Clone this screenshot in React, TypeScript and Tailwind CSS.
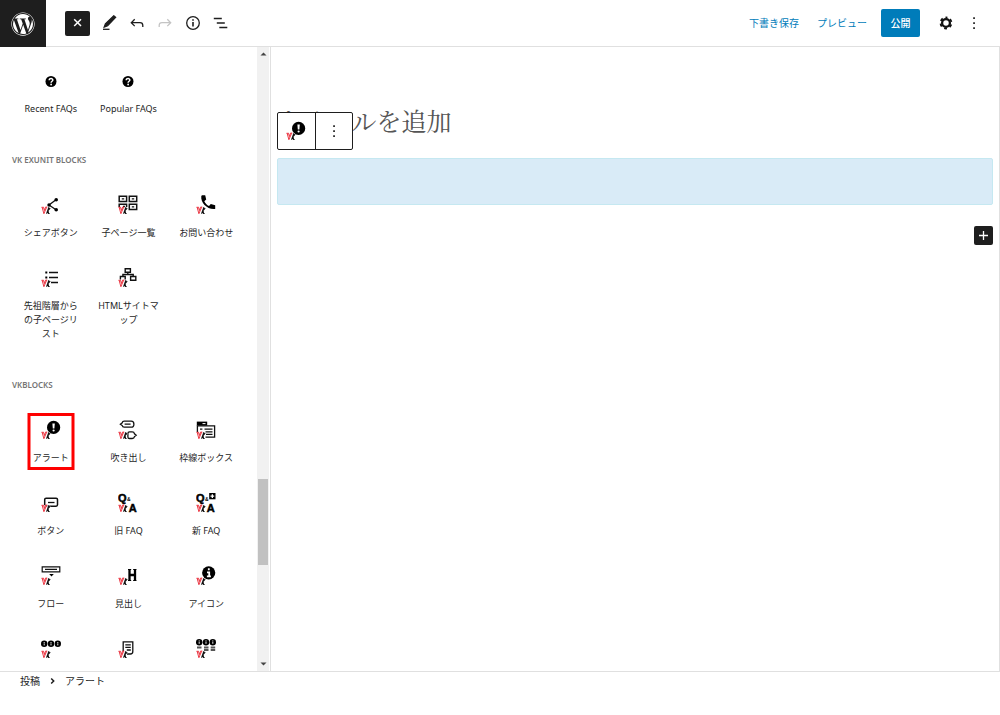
import type { ReactNode } from "react";
import { FaWordpress } from "react-icons/fa";

type Block = { name: string; lines?: string[]; icon: ReactNode; marked?: boolean; unlabelled?: boolean };

function VkMark() {
  return (
    <g fill="none">
      <path d="M7.8 12.2 L5.6 18.8 M8.9 13 L6.9 15.6 L7.6 18.4" stroke="#fff" strokeWidth="2.2" />
      <path d="M0.7 12 L6 12.4 L3.4 19 Z" fill="#fff" />
      <path d="M0.5 12.3h2.3M1.2 12.5L2.9 18.7L5.6 12.3M2.5 12.5L3.5 15.5L4.5 12.1h1.8" stroke="#e8202e" strokeWidth="0.9" />
      <path d="M7.9 12.3 L5.6 18.8 M9.2 13.2 L7 15.5 L7.6 18.5H8.6" stroke="#111" strokeWidth="1.1" />
    </g>
  );
}

function VkIcon({ children }: { children: ReactNode }) {
  return (
    <svg viewBox="0 0 20 20" className="size-5" aria-hidden="true">
      {children}
      <VkMark />
    </svg>
  );
}

function Question() {
  return (
    <svg viewBox="0 0 20 20" className="size-5" aria-hidden="true">
      <circle cx="10" cy="10.5" r="5.5" fill="#000" />
      <path d="M8.2 9.2 C8.2 6.9 12 7.1 11.8 9.2 C11.7 10.3 10.1 10.3 10.1 11.7" fill="none" stroke="#fff" strokeWidth="1.5" />
      <circle cx="10.1" cy="13.5" r="0.9" fill="#fff" />
    </svg>
  );
}

const line = { fill: "none", stroke: "#111", strokeWidth: 1.3 };

const alertIcon = (
  <VkIcon>
    <circle cx="12.6" cy="7.4" r="6.6" />
    <path d="M11.4 3.5h2.4l-.4 5h-1.6z" fill="#fff" />
    <circle cx="12.6" cy="10.5" r="1.1" fill="#fff" />
  </VkIcon>
);

const faqLetters = (
  <g fontFamily="Liberation Sans, sans-serif" fontWeight="bold">
    <text x="0" y="8.6" fontSize="11" stroke="#000" strokeWidth="0.5">Q</text>
    <text x="9" y="7.8" fontSize="5">&amp;</text>
    <text x="10.8" y="19.4" fontSize="11" stroke="#000" strokeWidth="0.5">A</text>
  </g>
);

const infoDots = (y: number) =>
  [3.2, 10, 16.8].map((x) => (
    <g key={x}>
      <circle cx={x} cy={y} r="3.2" />
      <path d={`M${x} ${y - 1.8}v1M${x} ${y - 0.4}v2`} stroke="#fff" strokeWidth="0.9" />
    </g>
  ));

const faqBlocks: Block[] = [
  { name: "Recent FAQs", icon: <Question /> },
  { name: "Popular FAQs", icon: <Question /> },
];

const exUnitBlocks: Block[] = [
  {
    name: "シェアボタン",
    icon: (
      <VkIcon>
        <path d="M15 4.8 L8 10 L15 14.8" {...line} />
        <circle cx="15.2" cy="4.8" r="1.8" />
        <circle cx="15.2" cy="14.8" r="1.8" />
        <circle cx="8" cy="10" r="1.7" />
      </VkIcon>
    ),
  },
  {
    name: "子ページ一覧",
    icon: (
      <VkIcon>
        <path d="M1.2 1.2h7.4v5.4h-7.4zM11.3 1.2h7.4v5.4h-7.4zM11.3 9.2h7.4v5.4h-7.4zM1.2 12V9.2h7.4V12" {...line} strokeWidth={1.5} />
        <path d="M3.8 3.9h2.4M13.8 3.9h2.4M13.8 11.9h2.4M5 11.5h2" {...line} />
      </VkIcon>
    ),
  },
  {
    name: "お問い合わせ",
    icon: (
      <VkIcon>
        <path d="M6 .3 L9.2 .3 L10.2 4.5 L8.3 6.2 C9.3 8.4 10.8 9.9 13 11 L14.8 9.1 L19.2 10.2 V13.9 C11.5 14.9 4.4 8 5.3 1 Z" />
      </VkIcon>
    ),
  },
  {
    name: "先祖階層からの子ページリスト",
    lines: ["先祖階層から", "の子ページリ", "スト"],
    icon: (
      <VkIcon>
        <path d="M8 4.5h9M8 9.5h9M10 14.5h7" {...line} />
        <path d="M4.3 3.5h2v2h-2zM4.3 8.5h2v2h-2z" />
      </VkIcon>
    ),
  },
  {
    name: "HTMLサイトマップ",
    lines: ["HTMLサイトマ", "ップ"],
    icon: (
      <VkIcon>
        <path d="M7.2 .7h5.2v3.6h-5.2zM12.6 8.5h5.2v3.8h-5.2zM2.4 11.5V8.5h4.8v3M9.8 4.3v2.2M4.9 8.5V6.5h10.3V8.5" {...line} strokeWidth={1.4} />
      </VkIcon>
    ),
  },
];

const vkBlocks: Block[] = [
  { name: "アラート", marked: true, icon: alertIcon },
  {
    name: "吹き出し",
    icon: (
      <VkIcon>
        <path d="M6.2 1.2h7q2.7 0 2.7 3t-2.7 3h-7q-1.7 0-2-1.7L2.4 4.2l1.8-1.3q.3-1.7 2-1.7zM6.6 4.2h6" {...line} />
        <path d="M11.5 11.9h2.7q1.9 0 2.3 1.9l1.7 1.4-1.7 1.4q-.4 1.900-2.3 1.900H11.5q-1.600 0-1.600-1.600V13.500q0-1.600 1.600-1.600z" {...line} />
      </VkIcon>
    ),
  },
  {
    name: "枠線ボックス",
    icon: (
      <VkIcon>
        <path d="M.8 1.6h10.4v4H.8z" />
        <path d="M1.4 12V5.9h17.2v11.2H9.5M4 9.2h2.4M8.5 9.2h8M9.5 11.8h7M10 14.4h6.5" {...line} />
        <path d="M6.5 3.6h3" stroke="#fff" strokeWidth="1" />
      </VkIcon>
    ),
  },
  {
    name: "ボタン",
    icon: (
      <VkIcon>
        <rect x="3.7" y="5.2" width="12.8" height="8" rx="1.4" {...line} strokeWidth={1.5} />
        <path d="M7 9.5h6.5" {...line} />
      </VkIcon>
    ),
  },
  { name: "旧 FAQ", icon: <VkIcon>{faqLetters}</VkIcon> },
  {
    name: "新 FAQ",
    icon: (
      <VkIcon>
        {faqLetters}
        <path d="M13.2 0h6.3v6.3h-6.3z" />
        <path d="M16.35 1.3v3.7M14.5 3.15h3.7" stroke="#fff" strokeWidth="1.3" />
      </VkIcon>
    ),
  },
  {
    name: "フロー",
    icon: (
      <VkIcon>
        <path d="M1.2 .8h17.6v5H1.2zM4 3.3h12" {...line} strokeWidth={1.2} />
        <path d="M8.2 8h4.6L10.5 10.6z" />
      </VkIcon>
    ),
  },
  {
    name: "見出し",
    icon: (
      <VkIcon>
        <path d="M10 3.5h3.2M15.2 3.5h3.2M10 14.5h3.2M15.2 14.5h3.2" stroke="#000" strokeWidth="1" />
        <path d="M11.5 3v12M17 3v12M11 9h6" stroke="#000" strokeWidth="2.3" />
      </VkIcon>
    ),
  },
  {
    name: "アイコン",
    icon: (
      <VkIcon>
        <circle cx="12.7" cy="6.8" r="6.6" />
        <path d="M12.8 2.3v2M11 6.3h2.2v4.2M10.9 10.4h4" fill="none" stroke="#fff" strokeWidth="1.8" />
      </VkIcon>
    ),
  },
  { name: "アイコンカード", unlabelled: true, icon: <VkIcon>{infoDots(4.8)}</VkIcon> },
  {
    name: "目次",
    unlabelled: true,
    icon: (
      <VkIcon>
        <path d="M5.2 12V2.8h9.6v9.7q0 2.500-2.500 2.500H9M7.300 5.800h5.500M7.300 8.400h5.500M8.800 11h4" {...line} />
      </VkIcon>
    ),
  },
  {
    name: "アイコンリスト",
    unlabelled: true,
    icon: (
      <VkIcon>
        {infoDots(3.2)}
        <path d="M1 8.5h4.5M8 8.5h4.5M14.7 8.5h4.5M8 11h4.5M14.7 11h4.5" stroke="#555" strokeWidth="1.8" />
      </VkIcon>
    ),
  },
];

function BlockGrid({ blocks }: { blocks: Block[] }) {
  return (
    <ul className="grid grid-cols-3">
      {blocks.map((block) => (
        <li key={block.name} className="relative">
          <button type="button" aria-label={block.name} className="flex w-full flex-col items-center pt-3 pb-4">
            {block.icon}
            <span className="mt-[11px] min-h-[14px] text-[9px] leading-[14px] whitespace-nowrap text-[#1e1e1e]">
              {!block.unlabelled &&
                (block.lines ?? [block.name]).map((text) => (
                  <span key={text} className="block">
                    {text}
                  </span>
                ))}
            </span>
          </button>
          {block.marked && (
            <span className="pointer-events-none absolute top-[5px] left-1/2 h-[57px] w-[47px] -translate-x-1/2 border-3 border-[#fe0000]" />
          )}
        </li>
      ))}
    </ul>
  );
}

function GroupHeading({ children }: { children: ReactNode }) {
  return <h2 className="pt-[21px] pb-4 text-[8px] leading-[14px] font-semibold text-[#757575]">{children}</h2>;
}

function Kebab() {
  return (
    <svg viewBox="0 0 20 20" className="size-5" fill="#1e1e1e" aria-hidden="true">
      <path d="M9.2 4.2h1.7v1.7H9.2zM9.2 9.2h1.7v1.7H9.2zM9.2 14.2h1.7v1.7H9.2z" />
    </svg>
  );
}

function ToolButton({ label, disabled, children }: { label: string; disabled?: boolean; children: ReactNode }) {
  return (
    <button type="button" aria-label={label} disabled={disabled} className="size-5 text-[#1e1e1e] disabled:text-[#c4c4c4]">
      <svg viewBox="0 0 20 20" className="size-5" fill="none" stroke="currentColor" strokeWidth="1.3" aria-hidden="true">
        {children}
      </svg>
    </button>
  );
}

function Header() {
  return (
    <header className="flex h-[47px] shrink-0 items-center border-b border-[#e0e0e0] pr-4">
      <a href="#posts" aria-label="投稿を表示" className="-mb-px flex h-[47px] w-[46px] items-center justify-center bg-[#1e1e1e] text-white">
        <FaWordpress className="size-6" />
      </a>
      <div className="ml-[19px] flex items-center gap-[9px]">
        <button type="button" aria-label="ブロック挿入ツールを閉じる" className="flex size-[25px] items-center justify-center rounded-xs bg-[#1e1e1e]">
          <svg viewBox="0 0 20 20" className="size-5" stroke="#fff" strokeWidth="1.5" aria-hidden="true">
            <path d="M6.2 6.2l6.8 6.8M13 6.2l-6.8 6.8" />
          </svg>
        </button>
        <div className="flex items-center gap-2">
          <ToolButton label="ツール">
            <path d="M14.7 2.8 L16.6 4.4 L8.6 12.8 L5.2 14.1 L6.4 10.8 Z" fill="currentColor" />
            <path d="M4 16.3h6.5" />
          </ToolButton>
          <ToolButton label="元に戻す">
            <path d="M7.7 6.3 L4.3 9.7 L7.7 13.1 M4.5 9.7 H13 Q15.8 9.7 15.8 12.5 V14" />
          </ToolButton>
          <ToolButton label="やり直す" disabled>
            <path d="M12.3 6.3 L15.7 9.7 L12.3 13.1 M15.5 9.7 H7 Q4.2 9.7 4.2 12.5 V14" />
          </ToolButton>
          <ToolButton label="詳細">
            <circle cx="10" cy="10" r="6.3" />
            <path d="M10 9v4.5M10 6.2v1.5" strokeWidth="1.6" />
          </ToolButton>
          <ToolButton label="リスト表示">
            <path d="M2.8 5.5h8M5.8 10h8M8.3 14.5h8" />
          </ToolButton>
        </div>
      </div>
      <div className="ml-auto flex items-center text-[10px] text-[#007cba]">
        <button type="button">下書き保存</button>
        <button type="button" className="ml-[18px]">プレビュー</button>
        <button type="button" className="ml-[14px] h-7 w-[39px] rounded-xs bg-[#007cba] font-medium text-white">公開</button>
        <button type="button" aria-label="設定" className="ml-4 size-5">
          <svg viewBox="0 0 20 20" className="size-5" fill="none" aria-hidden="true">
            <circle cx="10" cy="10" r="3.9" stroke="#111" strokeWidth="2.3" />
            <circle cx="10" cy="10" r="5.5" stroke="#111" strokeWidth="1.8" strokeDasharray="2.88 2.88" strokeDashoffset="1.44" transform="rotate(-90 10 10)" />
          </svg>
        </button>
        <button type="button" aria-label="オプション" className="ml-2 size-5">
          <Kebab />
        </button>
      </div>
    </header>
  );
}

function ScrollTrack() {
  return (
    <div className="flex w-3 shrink-0 flex-col items-center bg-[#f1f1f1]" aria-hidden="true">
      <svg viewBox="0 0 12 14" className="h-[14px] w-3 shrink-0" fill="#444">
        <path d="M3.5 8.5L6.5 5.5l3 3z" />
      </svg>
      <div className="grow-418" />
      <div className="w-[10px] grow-86 bg-[#c1c1c1]" />
      <div className="grow-92" />
      <svg viewBox="0 0 12 14" className="h-[14px] w-3 shrink-0" fill="#444">
        <path d="M3.5 5.5L6.5 8.5l3-3z" />
      </svg>
    </div>
  );
}

export default function App() {
  return (
    <div className="flex h-screen flex-col overflow-hidden bg-white font-['Noto_Sans','Noto_Sans_CJK_JP',sans-serif]" lang="ja">
      <Header />
      <div className="flex min-h-0 flex-1">
        <aside className="flex w-[271px] shrink-0 border-r border-[#e0e0e0] pr-px" aria-label="ブロックライブラリ">
          <div className="min-w-0 flex-1 overflow-hidden px-3 pt-3">
            <BlockGrid blocks={faqBlocks} />
            <GroupHeading>VK EXUNIT BLOCKS</GroupHeading>
            <BlockGrid blocks={exUnitBlocks} />
            <GroupHeading>VKBLOCKS</GroupHeading>
            <BlockGrid blocks={vkBlocks} />
          </div>
          <ScrollTrack />
        </aside>
        <main className="min-w-0 flex-1 border-r border-[#e0e0e0] px-[6px] pt-[54px]">
          <div className="relative">
            <h1 className="font-['Noto_Serif_CJK_JP','Noto_Sans_CJK_JP',serif] text-[25px] leading-[38px] font-normal text-[#555]">
              タイトルを追加
            </h1>
            <div className="absolute top-[11px] left-0 flex h-[38px] w-[76px] divide-x divide-[#1e1e1e] rounded-xs border border-[#1e1e1e] bg-white">
              <button type="button" aria-label="アラート" className="flex flex-1 items-center justify-center">
                {alertIcon}
              </button>
              <button type="button" aria-label="オプション" className="flex flex-1 items-center justify-center">
                <Kebab />
              </button>
            </div>
          </div>
          <div className="mt-[19px] h-[47px] rounded-xs border border-[#c5e8f1] bg-[#d9ebf7]" />
          <div className="mt-[21px] flex justify-end">
            <button type="button" aria-label="ブロックを追加" className="flex size-[19px] items-center justify-center rounded-xs bg-[#1e1e1e]">
              <svg viewBox="0 0 19 19" className="size-[19px]" stroke="#fff" strokeWidth="1.3" aria-hidden="true">
                <path d="M9.5 5v9M5 9.5h9" />
              </svg>
            </button>
          </div>
        </main>
      </div>
      <footer className="h-11 shrink-0 border-t border-[#e0e0e0] px-5 pt-[2px]">
        <nav aria-label="ブロックのパンくずリスト" className="flex items-center text-[10px] leading-[14px] text-[#1e1e1e]">
          <button type="button">投稿</button>
          <svg viewBox="0 0 25 14" className="h-[14px] w-[25px]" fill="none" stroke="#1e1e1e" strokeWidth="1.5" aria-hidden="true">
            <path d="M11.2 4.5L13.7 7l-2.5 2.5" />
          </svg>
          <span>アラート</span>
        </nav>
      </footer>
    </div>
  );
}
